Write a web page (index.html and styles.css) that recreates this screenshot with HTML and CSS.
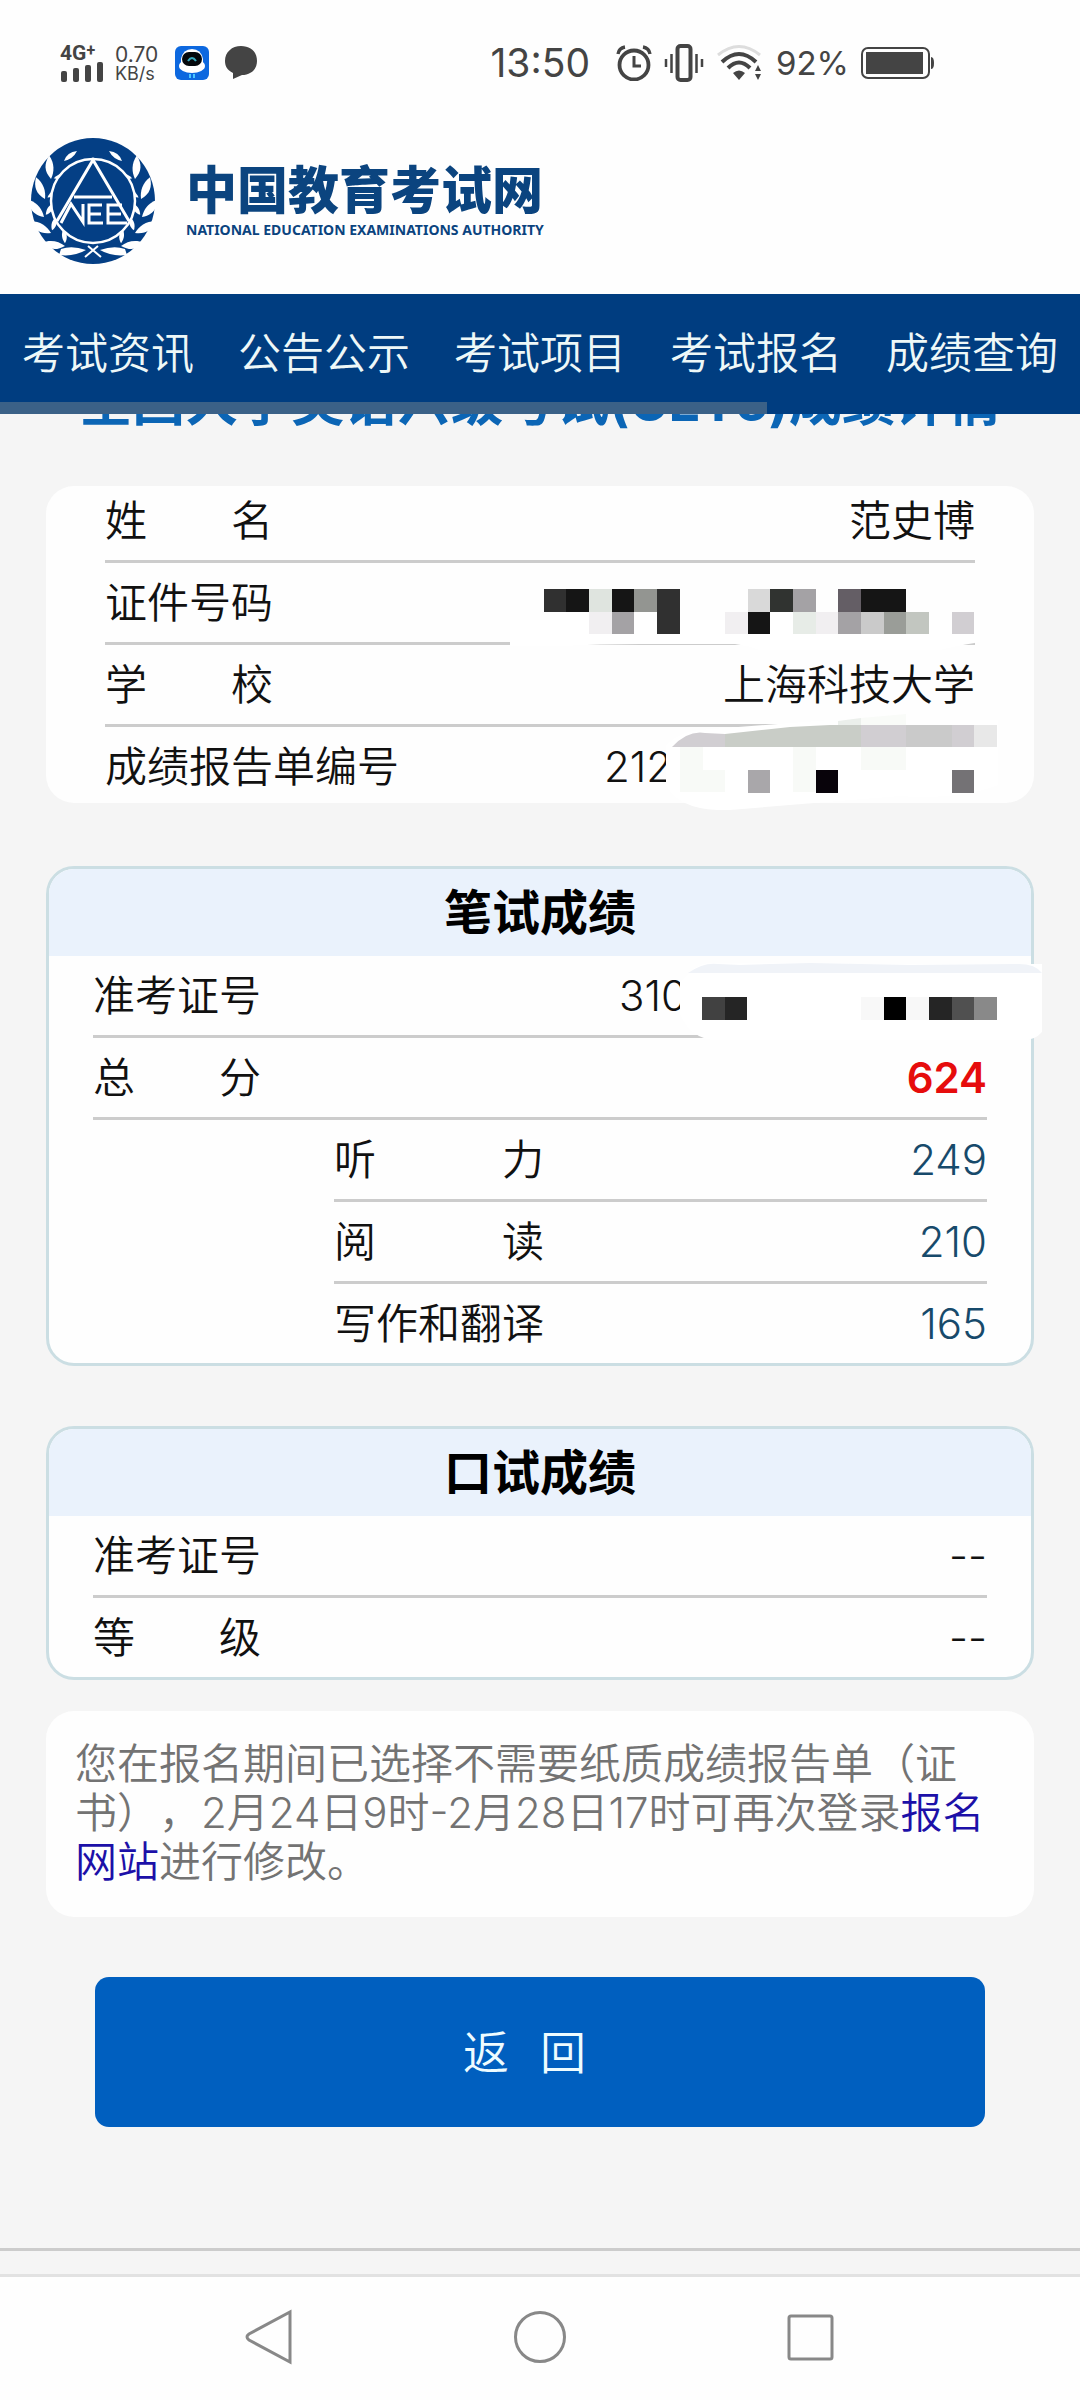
FILE: index.html
```html
<!DOCTYPE html>
<html lang="zh-CN">
<head>
<meta charset="utf-8">
<meta name="viewport" content="width=device-width, initial-scale=1">
<title>中国教育考试网</title>
<link rel="stylesheet" href="styles.css">
</head>
<body>
<header class="top">
  <div class="status">
    <div class="status-left">
      <div class="signal">
        <span class="net">4G<sup>+</sup></span>
        <svg width="44" height="20" viewBox="0 0 44 20" fill="#444"><rect x="1" y="9" width="6" height="11" rx="2"/><rect x="13" y="6" width="6" height="14" rx="2"/><rect x="25" y="3" width="6" height="17" rx="2"/><rect x="37" y="0" width="6" height="20" rx="2"/></svg>
      </div>
      <div class="speed"><span class="rate">0.70</span><span>KB/s</span></div>
      <svg class="app" width="34" height="34" viewBox="0 0 34 34"><rect width="34" height="34" rx="6" fill="#0d68df"/><ellipse cx="17" cy="20" rx="13" ry="7" fill="#fff"/><path d="M6 13Q8 3 17 3T28 13V19H6Z" fill="#fff"/><rect x="7" y="6" width="20" height="14" rx="7" fill="#04080c"/><path d="M13 15Q17 9 21 15" fill="none" stroke="#38a9bd" stroke-width="2"/><path d="M15 28V32M19 28V32" stroke="#4bc8ff" stroke-width="2"/></svg>
      <svg width="34" height="34" viewBox="0 0 34 34" fill="#444"><path d="M17 0C27 0 33 6 33 15S26 29 18 29L9 33V27C3 24 1 20 1 15C1 6 8 0 17 0Z"/></svg>
    </div>
    <div class="status-right">
      <span class="clock">13:50</span>
      <svg class="alarm" width="36" height="36" viewBox="0 0 36 36" fill="none" stroke="#444"><circle cx="18" cy="20" r="14.5" stroke-width="3.8"/><path d="M18 11V21H25" stroke-width="3"/><path d="M2 9Q3 3 9 2M34 9Q33 3 27 2" stroke-width="3.4"/></svg>
      <svg class="vibrate" width="40" height="38" viewBox="0 0 40 38" fill="none" stroke="#444"><rect x="13.5" y="2" width="13" height="34" rx="3" stroke-width="4"/><path d="M7.500 10V29M32.500 10V29" stroke-width="2.500"/><path d="M2 15V23M38 15V23" stroke-width="2.500"/></svg>
      <svg class="wifi" width="48" height="38" viewBox="0 0 48 38" fill="none" stroke="#444"><path d="M2 11Q23-6 44 11" stroke="#ddd" stroke-width="3"/><path d="M6 18Q23 2 40 18" stroke-width="4"/><path d="M12 24Q23 13 34 24" stroke-width="4"/><path d="M17 29Q23 24 29 29L23 36Z" fill="#444" stroke="none"/><path d="M39 27L42 21L45 27ZM39 30L42 36L45 30Z" fill="#444" stroke="none"/></svg>
      <span class="percent">92%</span>
      <svg width="74" height="32" viewBox="0 0 74 32"><rect x="1" y="1" width="67" height="30" rx="6" fill="none" stroke="#444" stroke-width="2"/><rect x="5" y="5" width="57" height="22" fill="#444"/><path d="M70 10Q73 10 73 16T70 22Z" fill="#444"/></svg>
    </div>
  </div>
  <a class="brand" href="#">
    <svg width="126" height="128" viewBox="0 0 126 128">
      <defs>
        <g id="leaf" fill="#fff"><path d="M0 0C-10-3-14-9-14-19C-5-15-1-8 0 0Z"/><path d="M2-2C3-8 6-11 11-13C11-7 7-3 2-2Z"/></g>
        <g id="branch">
          <use href="#leaf" transform="translate(15 62) rotate(14)"/>
          <use href="#leaf" transform="translate(14 80) rotate(-6)"/>
          <use href="#leaf" transform="translate(21 96) rotate(-24)"/>
          <use href="#leaf" transform="translate(35 109) rotate(-46)"/>
          <use href="#leaf" transform="translate(21 42) rotate(32)"/>
          <path fill="#fff" d="M34 24Q37 15 47 14Q43 22 34 24ZM31 112Q42 108 56 113Q44 120 29 118Z"/>
        </g>
      </defs>
      <ellipse cx="63" cy="64" rx="62" ry="63" fill="#043f85"/>
      <use href="#branch"/>
      <use href="#branch" transform="translate(126 0) scale(-1 1)"/>
      <circle cx="63" cy="64" r="42" fill="#043f85" stroke="#fff" stroke-width="2.500"/>
      <g fill="none" stroke="#fff" stroke-width="3"><path d="M27 84L63 23L99 84M44 60H82"/><path d="M31 86L41 67L53 85V67M72 68H59V86H73M59 77H71M92 68H78V86H97M78 77H91"/><path d="M58 109L71 120M68 109L55 120" stroke-width="2"/></g>
    </svg>
    <span class="wordmark"><span class="name">中国教育考试网</span><span class="en">NATIONAL EDUCATION EXAMINATIONS AUTHORITY</span></span>
  </a>
  <nav class="menu">
    <a href="#">考试资讯</a><a href="#">公告公示</a><a href="#">考试项目</a><a href="#">考试报名</a><a href="#">成绩查询</a>
    <span class="progress"></span>
  </nav>
</header>

<main class="page">
  <h1 class="title">全国大学英语六级考试(CET6)成绩详情</h1>

  <section class="card profile">
    <table class="rows">
      <tr><th>姓　　名</th><td>范史博</td></tr>
      <tr><th>证件号码</th><td></td></tr>
      <tr><th>学　　校</th><td>上海科技大学</td></tr>
      <tr><th>成绩报告单编号</th><td class="partial">212</td></tr>
    </table>
    <svg class="mask mask-profile" width="510" height="250" viewBox="0 0 510 250">
      <path fill="#fff" d="M10 60V86H60Q100 84 140 84H235Q250 86 260 90H440Q460 85 480 82V60Z"/>
      <path fill="#fff" d="M166 186Q178 172 200 170L330 160H498V225Q460 240 400 236L230 250Q180 252 166 225Z"/>
      <g shape-rendering="crispEdges">
        <path fill="#303030" d="M44 29h22v23h-22zM157 29h23v45h-23z"/><path fill="#151515" d="M66 29h23v23h-23zM112 29h22v23h-22zM248 52h22v22h-22zM361 29h45v23h-45z"/>
        <path fill="#dfe4df" d="M89 29h23v23h-23z"/><path fill="#e7ece7" d="M293 52h23v22h-23z"/><path fill="#939591" d="M134 29h23v23h-23z"/><path fill="#9a9d98" d="M384 52h22v22h-22z"/>
        <path fill="#a4a2a5" d="M112 52h22v22h-22zM293 29h23v23h-23zM338 52h23v22h-23z"/><path fill="#f1eff1" d="M89 52h23v22h-23zM225 52h23v22h-23zM316 52h22v22h-22z"/>
        <path fill="#d9d9d9" d="M248 29h22v23h-22z"/><path fill="#303330" d="M270 29h23v23h-23z"/><path fill="#645e65" d="M338 29h23v23h-23z"/>
        <path fill="#cacaca" d="M361 52h23v22h-23z"/><path fill="#c2c6c0" d="M406 52h23v22h-23z"/><path fill="#d1ced2" d="M452 52h22v22h-22z"/>
      </g>
      <path fill="#d1ced2" d="M172 187Q188 170 205 173L225 174V187Z"/>
      <path fill="#c9cdc7" d="M225 174L290 167L330 165H361V187H225Z"/>
      <path fill="#ebefeb" d="M338 161L361 158V165H338Z"/>
      <path fill="#f9fbf8" d="M361 158L406 154V165H361Z"/>
      <path fill="#d1ced2" d="M361 165h45v22h-45z"/><path fill="#cacaca" d="M406 165h46v22h-46z"/><path fill="#d1ced2" d="M452 165h22v22h-22z"/><path fill="#e8e8e8" d="M474 165h23v22h-23z"/>
      <path fill="#f8faf7" d="M180 187h23v45h-23zM203 210h22v22h-22zM293 187h23v45h-23zM361 187h45v23h-45z"/>
      <g shape-rendering="crispEdges"><path fill="#a9a7aa" d="M248 210h22v23h-22z"/><path fill="#08030a" d="M316 210h22v23h-22z"/><path fill="#747275" d="M452 210h22v23h-22z"/></g>
    </svg>
  </section>

  <section class="card scores written">
    <h2>笔试成绩</h2>
    <table class="rows">
      <tr><th colspan="2">准考证号</th><td class="partial">310</td></tr>
      <tr><th colspan="2">总　　分</th><td class="total">624</td></tr>
      <tr><td class="indent"></td><th>听　　　力</th><td class="score">249</td></tr>
      <tr><td class="indent"></td><th>阅　　　读</th><td class="score">210</td></tr>
      <tr><td class="indent"></td><th>写作和翻译</th><td class="score">165</td></tr>
    </table>
    <svg class="mask mask-ticket" width="364" height="84" viewBox="0 0 364 84">
      <path fill="#fff" d="M0 26L12 14Q22 6 34 7L362 8V76Q355 84 344 84H34Q10 82 0 58Z"/>
      <path fill="#f0f3f8" d="M8 17Q24 6 38 8L60 9L130 7L230 9L335 8Q355 7 362 17Z"/>
      <g shape-rendering="crispEdges"><path fill="#414141" d="M22 41h23v23h-23z"/><path fill="#252525" d="M45 41h22v23h-22zM249 41h23v23h-23z"/><path d="M204 41h22v23h-22z"/><path fill="#505050" d="M272 41h22v23h-22z"/><path fill="#898989" d="M294 41h23v23h-23z"/><path fill="#f8f8f8" d="M181 41h23v23h-23zM226 41h23v23h-23z"/></g>
    </svg>
  </section>

  <section class="card scores">
    <h2>口试成绩</h2>
    <table class="rows">
      <tr><th>准考证号</th><td>--</td></tr>
      <tr><th>等　　级</th><td>--</td></tr>
    </table>
  </section>

  <p class="card note">您在报名期间已选择不需要纸质成绩报告单（证书），2月24日9时-2月28日17时可再次登录<a href="#">报名网站</a>进行修改。</p>

  <button class="back" type="button"><span>返</span><span>回</span></button>
</main>

<div class="strip"></div>
<footer class="keys">
  <button type="button" aria-label="返回"><svg width="56" height="56" viewBox="0 0 56 56"><path d="M48 3V53L7 31Q3 28 7 25Z"/></svg></button>
  <button type="button" aria-label="主页"><svg width="56" height="56" viewBox="0 0 56 56"><circle cx="28" cy="28" r="24.500"/></svg></button>
  <button type="button" aria-label="最近任务"><svg width="56" height="56" viewBox="0 0 56 56"><rect x="7" y="7" width="43" height="43" rx="2"/></svg></button>
</footer>
</body>
</html>
```
FILE: styles.css
```css
* { box-sizing: border-box; }

body {
  margin: 0;
  background: #f5f5f5;
  color: #111;
  font-family: Inter, "Noto Sans CJK SC", sans-serif;
  font-size: 42px;
  font-weight: 350;
  text-spacing-trim: space-all;
}

a { text-decoration: none; }
svg { display: block; flex: none; }

.top { position: relative; z-index: 1; background: #fefefe; }

.status {
  display: flex;
  align-items: center;
  justify-content: space-between;
  height: 124px;
  padding: 2px 145px 0 60px;
  color: #444;
  font-weight: 400;
}
.status-left, .status-right { display: flex; align-items: center; }
.signal { width: 55px; }
.net { display: block; font: 700 21px/18px Roboto, sans-serif; }
.net sup { font-size: 16px; line-height: 0; vertical-align: 4px; }
.speed { display: flex; flex-direction: column; width: 60px; font-size: 18px; line-height: 17px; }
.speed .rate { font-size: 21px; line-height: 20px; }
.app { margin-right: 15px; }
.clock { font-size: 39px; line-height: 40px; margin-right: 26px; }
.alarm { margin-right: 12px; }
.vibrate { margin-right: 12px; }
.wifi { margin-right: 12px; }
.percent { font-size: 33px; line-height: 40px; margin-right: 12px; }

.brand {
  display: flex;
  align-items: flex-start;
  gap: 30px;
  height: 170px;
  padding: 13px 30px;
  color: #0b447f;
}
.wordmark { display: flex; flex-direction: column; padding-top: 27px; }
.name { font-size: 51px; line-height: 54px; font-weight: 900; }
.en { font: 700 14px/24px "Noto Sans", sans-serif; white-space: nowrap; }

.menu { position: relative; display: flex; height: 120px; background: #003d80; }
.menu a { flex: 1; color: #eef8f8; font-size: 43px; line-height: 118px; text-align: center; white-space: nowrap; }
.progress { position: absolute; left: 0; bottom: 0; width: 71%; height: 12px; background: #3b6187; }

.page { display: flex; flex-direction: column; padding: 0 46px 121px; }

.title { margin: -42px 0 54px; color: #0b65b5; font-size: 53px; line-height: 60px; font-weight: 700; text-align: center; white-space: nowrap; }

.card { position: relative; margin: 0; background: #fefefe; border-radius: 28px; }

.rows { width: 100%; border-spacing: 0; }
.rows th, .rows td { height: 82px; padding: 0; line-height: 79px; font-weight: 350; border-bottom: 3px solid #ccc; white-space: nowrap; }
.rows th { text-align: left; }
.rows td { text-align: right; }
.rows tr:last-child th, .rows tr:last-child td { height: 79px; border-bottom: 0; }
.rows .indent { width: 241px; border-bottom: 0; }
.rows .partial { padding-right: 300px; }
.rows .total { color: #e60c0c; font-weight: 600; }
.rows .score { color: #174a6b; }

.profile { padding: 0 59px; margin-bottom: 63px; }
.profile .rows { margin: -5px 0 -3px; }
.profile .partial { padding-right: 303px; }

.scores { border: 3px solid #cbdee3; margin-bottom: 60px; }
.scores h2 { margin: 0; background: #eaf2fc; border-radius: 25px 25px 0 0; color: #000; font-size: 48px; line-height: 87px; font-weight: 700; text-align: center; }
.scores .rows { width: auto; min-width: calc(100% - 88px); margin: 0 44px; }

.mask { position: absolute; }
.mask-profile { right: 24px; top: 74px; }
.mask-ticket { right: -13px; top: 87px; }

.note { margin-top: -29px; padding: 28px 46px 31px 29px; color: #737373; line-height: 49px; }
.note a { color: #1c10a8; }

.back {
  display: flex;
  align-items: center;
  justify-content: center;
  gap: 31px;
  height: 150px;
  margin: 60px 49px 0;
  padding: 0 31px 6px 0;
  border: 0;
  border-radius: 14px;
  background: #005fbf;
  color: #eefcff;
  font: inherit;
  font-size: 46px;
}

.strip { height: 29px; border-top: 3px solid #ccc; border-bottom: 3px solid #e2e2e2; }

.keys { display: flex; justify-content: center; gap: 214px; padding: 32px 0 35px; background: #fefefe; }
.keys button { padding: 0; border: 0; background: none; }
.keys svg { fill: none; stroke: #888; stroke-width: 3; }
```
